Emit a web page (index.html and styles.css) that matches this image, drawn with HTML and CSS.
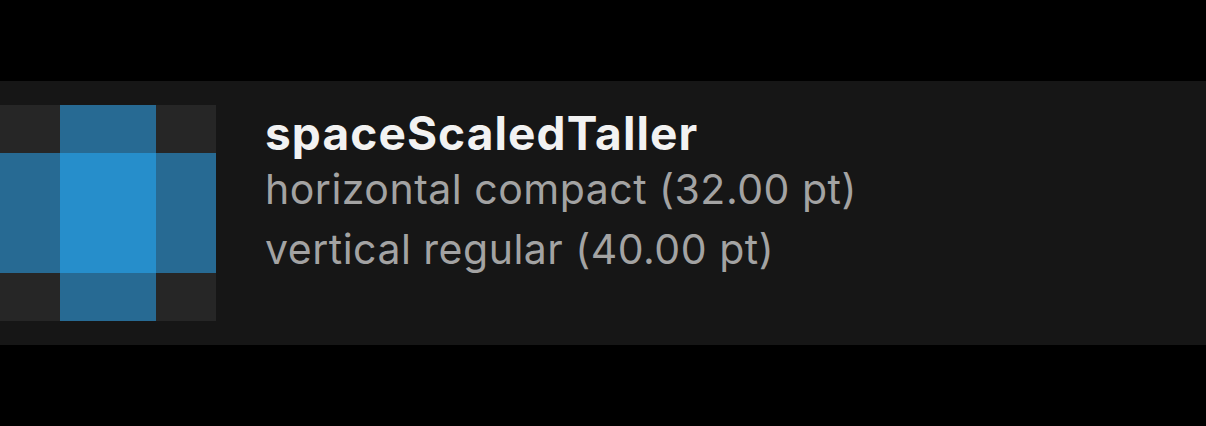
FILE: index.html
```html
<!DOCTYPE html>
<html>
<head>
<meta charset="utf-8">
<link rel="stylesheet" href="styles.css">
</head>
<body>
<div class="row">
  <div class="tile">
    <div class="c corner"></div><div class="c edge"></div><div class="c corner"></div>
    <div class="c edge"></div><div class="c center"></div><div class="c edge"></div>
    <div class="c corner"></div><div class="c edge"></div><div class="c corner"></div>
  </div>
  <div class="info">
    <div class="title">spaceScaledTaller</div>
    <div class="sub">horizontal compact (32.00 pt)</div>
    <div class="sub sub2">vertical regular (40.00 pt)</div>
  </div>
</div>
</body>
</html>
```
FILE: styles.css
```css
html, body {
  margin: 0;
  padding: 0;
  background: #000;
}
body {
  width: 1206px;
  height: 426px;
  overflow: hidden;
  font-family: Inter, "Noto Sans", sans-serif;
}
.row {
  margin-top: 81px;
  height: 264px;
  background: #161616;
  display: flex;
  align-items: center;
}
.tile {
  width: 216px;
  height: 216px;
  display: grid;
  grid-template-columns: 60px 96px 60px;
  grid-template-rows: 48px 120px 48px;
  flex: none;
}
.corner { background: #262626; }
.edge { background: #276a93; }
.center { background: #268ecb; }
.info {
  margin-left: 49px;
  align-self: flex-start;
  padding-top: 22px;
}
.title {
  color: #f2f2f2;
  font-weight: 700;
  font-size: 46px;
  line-height: 60px;
  letter-spacing: 1.1px;
}
.sub {
  color: #a3a3a3;
  font-size: 41px;
  line-height: 52px;
  letter-spacing: 0.5px;
}
.sub2 {
  margin-top: 8px;
}
```
